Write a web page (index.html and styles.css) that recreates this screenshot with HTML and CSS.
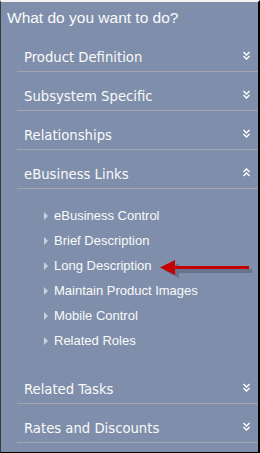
FILE: index.html
```html
<!DOCTYPE html>
<html>
  <head>
    <meta charset="UTF-8">
    <title>What do you want to do?</title>
    <link rel="stylesheet" href="styles.css">
  </head>
  <body>
    <div class="panel">
      <div class="title">What do you want to do?</div>

      <div class="section">
        <span>Product Definition</span>
        <svg class="chev" width="7" height="9" viewBox="0 0 7 9"><path d="M0.5 1 L3.5 4 L6.5 1 M0.5 5 L3.5 8 L6.5 5" fill="none" stroke="#fff" stroke-width="1.4"/></svg>
      </div>
      <div class="section">
        <span>Subsystem Specific</span>
        <svg class="chev" width="7" height="9" viewBox="0 0 7 9"><path d="M0.5 1 L3.5 4 L6.5 1 M0.5 5 L3.5 8 L6.5 5" fill="none" stroke="#fff" stroke-width="1.4"/></svg>
      </div>
      <div class="section">
        <span>Relationships</span>
        <svg class="chev" width="7" height="9" viewBox="0 0 7 9"><path d="M0.5 1 L3.5 4 L6.5 1 M0.5 5 L3.5 8 L6.5 5" fill="none" stroke="#fff" stroke-width="1.4"/></svg>
      </div>
      <div class="section">
        <span>eBusiness Links</span>
        <svg class="chev" width="7" height="9" viewBox="0 0 7 9"><path d="M0.5 4 L3.5 1 L6.5 4 M0.5 8 L3.5 5 L6.5 8" fill="none" stroke="#fff" stroke-width="1.4"/></svg>
      </div>

      <ul class="links">
        <li>eBusiness Control</li>
        <li>Brief Description</li>
        <li>Long Description</li>
        <li>Maintain Product Images</li>
        <li>Mobile Control</li>
        <li>Related Roles</li>
      </ul>

      <div class="section">
        <span>Related Tasks</span>
        <svg class="chev" width="7" height="9" viewBox="0 0 7 9"><path d="M0.5 1 L3.5 4 L6.5 1 M0.5 5 L3.5 8 L6.5 5" fill="none" stroke="#fff" stroke-width="1.4"/></svg>
      </div>
      <div class="section">
        <span>Rates and Discounts</span>
        <svg class="chev" width="7" height="9" viewBox="0 0 7 9"><path d="M0.5 1 L3.5 4 L6.5 1 M0.5 5 L3.5 8 L6.5 5" fill="none" stroke="#fff" stroke-width="1.4"/></svg>
      </div>

      <!-- annotation arrow pointing at Long Description -->
      <svg class="arrow" width="96" height="24" viewBox="0 0 96 24">
        <g fill="#5f6880" opacity="0.7">
          <rect x="17" y="10" width="75" height="4"/>
          <path d="M4 11.5 L19 4 L19 19 Z"/>
        </g>
        <g fill="#c40000">
          <rect x="13" y="7" width="76" height="3"/>
          <path d="M0 8.5 L15 1 L15 16 Z"/>
        </g>
      </svg>
    </div>
  </body>
</html>
```

FILE: styles.css
```css
body {
  margin: 0;
}
.panel {
  position: relative;
  box-sizing: border-box;
  width: 260px;
  height: 453px;
  background: #7f8fab;
  border-top: 2px solid #f4f4f4;
  border-left: 1px solid #3a3a3a;
  border-right: 2px solid #000;
  border-bottom: 1px solid #000;
  color: #fafafa;
}
.title {
  font-family: "Liberation Sans", Arial, sans-serif;
  font-size: 15.5px;
  line-height: 18px;
  padding: 7px 0 0 6px;
  height: 24px;
}
.section {
  display: flex;
  align-items: center;
  justify-content: space-between;
  margin-left: 16px;
  height: 38px;
  padding: 0 8px 0 7px;
  border-bottom: 1px solid #a3a6ad;
  font-family: "DejaVu Sans Condensed", "DejaVu Sans", sans-serif;
  font-size: 14.7px;
}
.section span {
  padding-top: 9px;
}
.chev {
  margin-top: 6px;
}
.links {
  list-style: none;
  margin: 0;
  padding: 14px 0 12px 43px;
  font-family: "Liberation Sans", Arial, sans-serif;
  font-size: 13px;
}
.links li {
  display: flex;
  align-items: center;
  height: 25px;
}
.links li::before {
  content: "";
  width: 0;
  height: 0;
  border-left: 4px solid #c9d0dc;
  border-top: 4px solid transparent;
  border-bottom: 4px solid transparent;
  margin-right: 6px;
}
.arrow {
  position: absolute;
  left: 159px;
  top: 257px;
}
```
